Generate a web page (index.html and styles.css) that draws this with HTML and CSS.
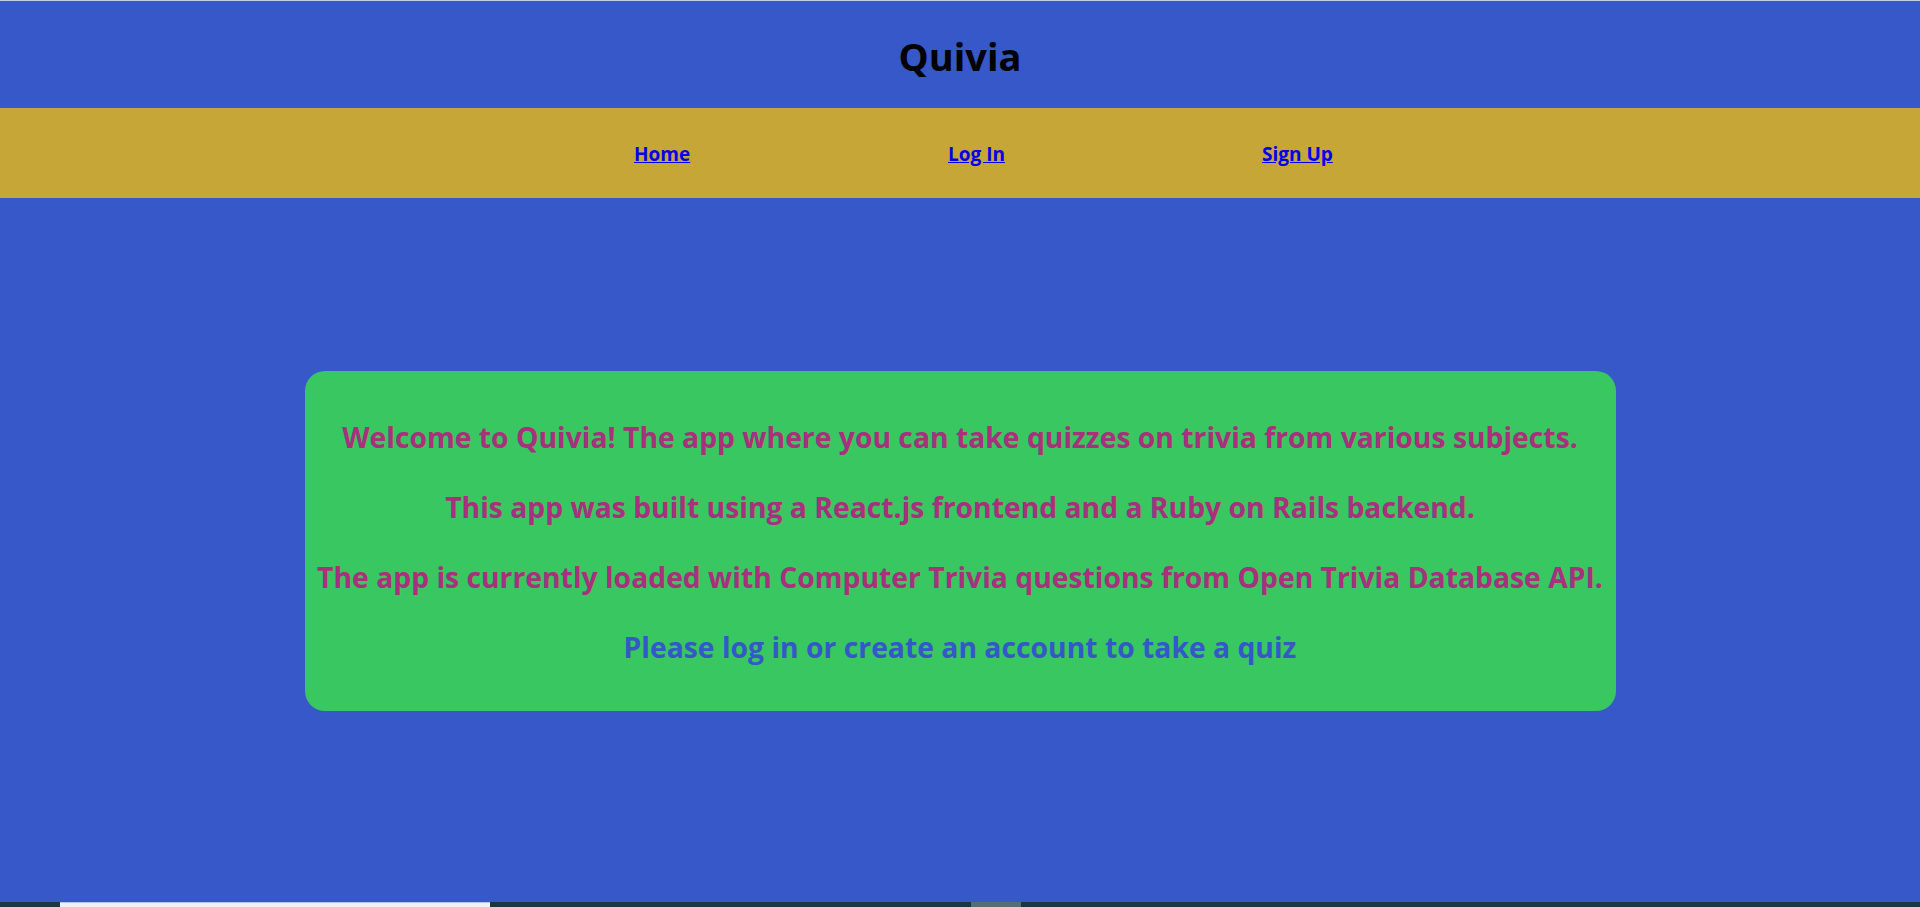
FILE: index.html
```html
<!DOCTYPE html>
<html lang="en">
<head>
<meta charset="utf-8">
<title>Quivia</title>
<link rel="stylesheet" href="styles.css">
</head>
<body>
<div class="page">
  <header class="site-header">
    <h1 class="site-title">Quivia</h1>
  </header>
  <nav class="site-nav">
    <ul class="nav-list">
      <li><a class="nav-link" href="#">Home</a></li>
      <li><a class="nav-link" href="#">Log In</a></li>
      <li><a class="nav-link" href="#">Sign Up</a></li>
    </ul>
  </nav>
  <main class="main">
    <section class="welcome-card">
      <p class="welcome-line">Welcome to Quivia! The app where you can take quizzes on trivia from various subjects.</p>
      <p class="welcome-line">This app was built using a React.js frontend and a Ruby on Rails backend.</p>
      <p class="welcome-line">The app is currently loaded with Computer Trivia questions from Open Trivia Database API.</p>
      <p class="welcome-line welcome-cta">Please log in or create an account to take a quiz</p>
    </section>
  </main>
  <div class="bottom-strip">
    <span class="strip-tab"></span>
    <span class="strip-thumb"></span>
  </div>
</div>
</body>
</html>
```
FILE: styles.css
```css
html, body {
  margin: 0;
  padding: 0;
}

body {
  font-family: "Open Sans", "Noto Sans", sans-serif;
  background: #3758c8;
}

.page {
  min-height: 100vh;
  display: flex;
  flex-direction: column;
}

.site-header {
  background: #3758c8;
  border-top: 1px solid #c9cfe2;
  padding-top: 3px;
  text-align: center;
}

.site-title {
  margin: 0;
  font-size: 38px;
  font-weight: 700;
  line-height: 104px;
  color: #000;
}

.site-nav {
  background: #c6a637;
  height: 90px;
  box-sizing: border-box;
  padding-top: 2px;
}

.nav-list {
  list-style: none;
  margin: 0;
  padding: 0 0 0 290px;
  display: grid;
  grid-template-columns: repeat(3, 314px);
  justify-content: center;
}

.nav-list li {
  line-height: 88px;
}

.nav-link {
  font-size: 19px;
  font-weight: 700;
  color: #0000ee;
  text-decoration: underline;
}

.main {
  flex: 1;
  padding-top: 173px;
}

.welcome-card {
  width: 1311px;
  margin: 0 auto;
  box-sizing: border-box;
  padding: 31px 0 29px;
  background: #38c760;
  border-radius: 20px;
  text-align: center;
}

.welcome-line {
  margin: 0;
  font-size: 28.3px;
  font-weight: 700;
  line-height: 70px;
  color: #a8307c;
  white-space: nowrap;
}

.welcome-cta {
  color: #3558c9;
}

.bottom-strip {
  height: 5px;
  background: #1d3542;
  position: relative;
}

.strip-tab {
  position: absolute;
  left: 60px;
  top: 0;
  width: 430px;
  height: 5px;
  box-sizing: border-box;
  background: #f1f1f3;
  border-top: 1px solid #b9c4e6;
}

.strip-thumb {
  position: absolute;
  left: 971px;
  top: 0;
  width: 50px;
  height: 5px;
  background: #5b6b72;
}
```
